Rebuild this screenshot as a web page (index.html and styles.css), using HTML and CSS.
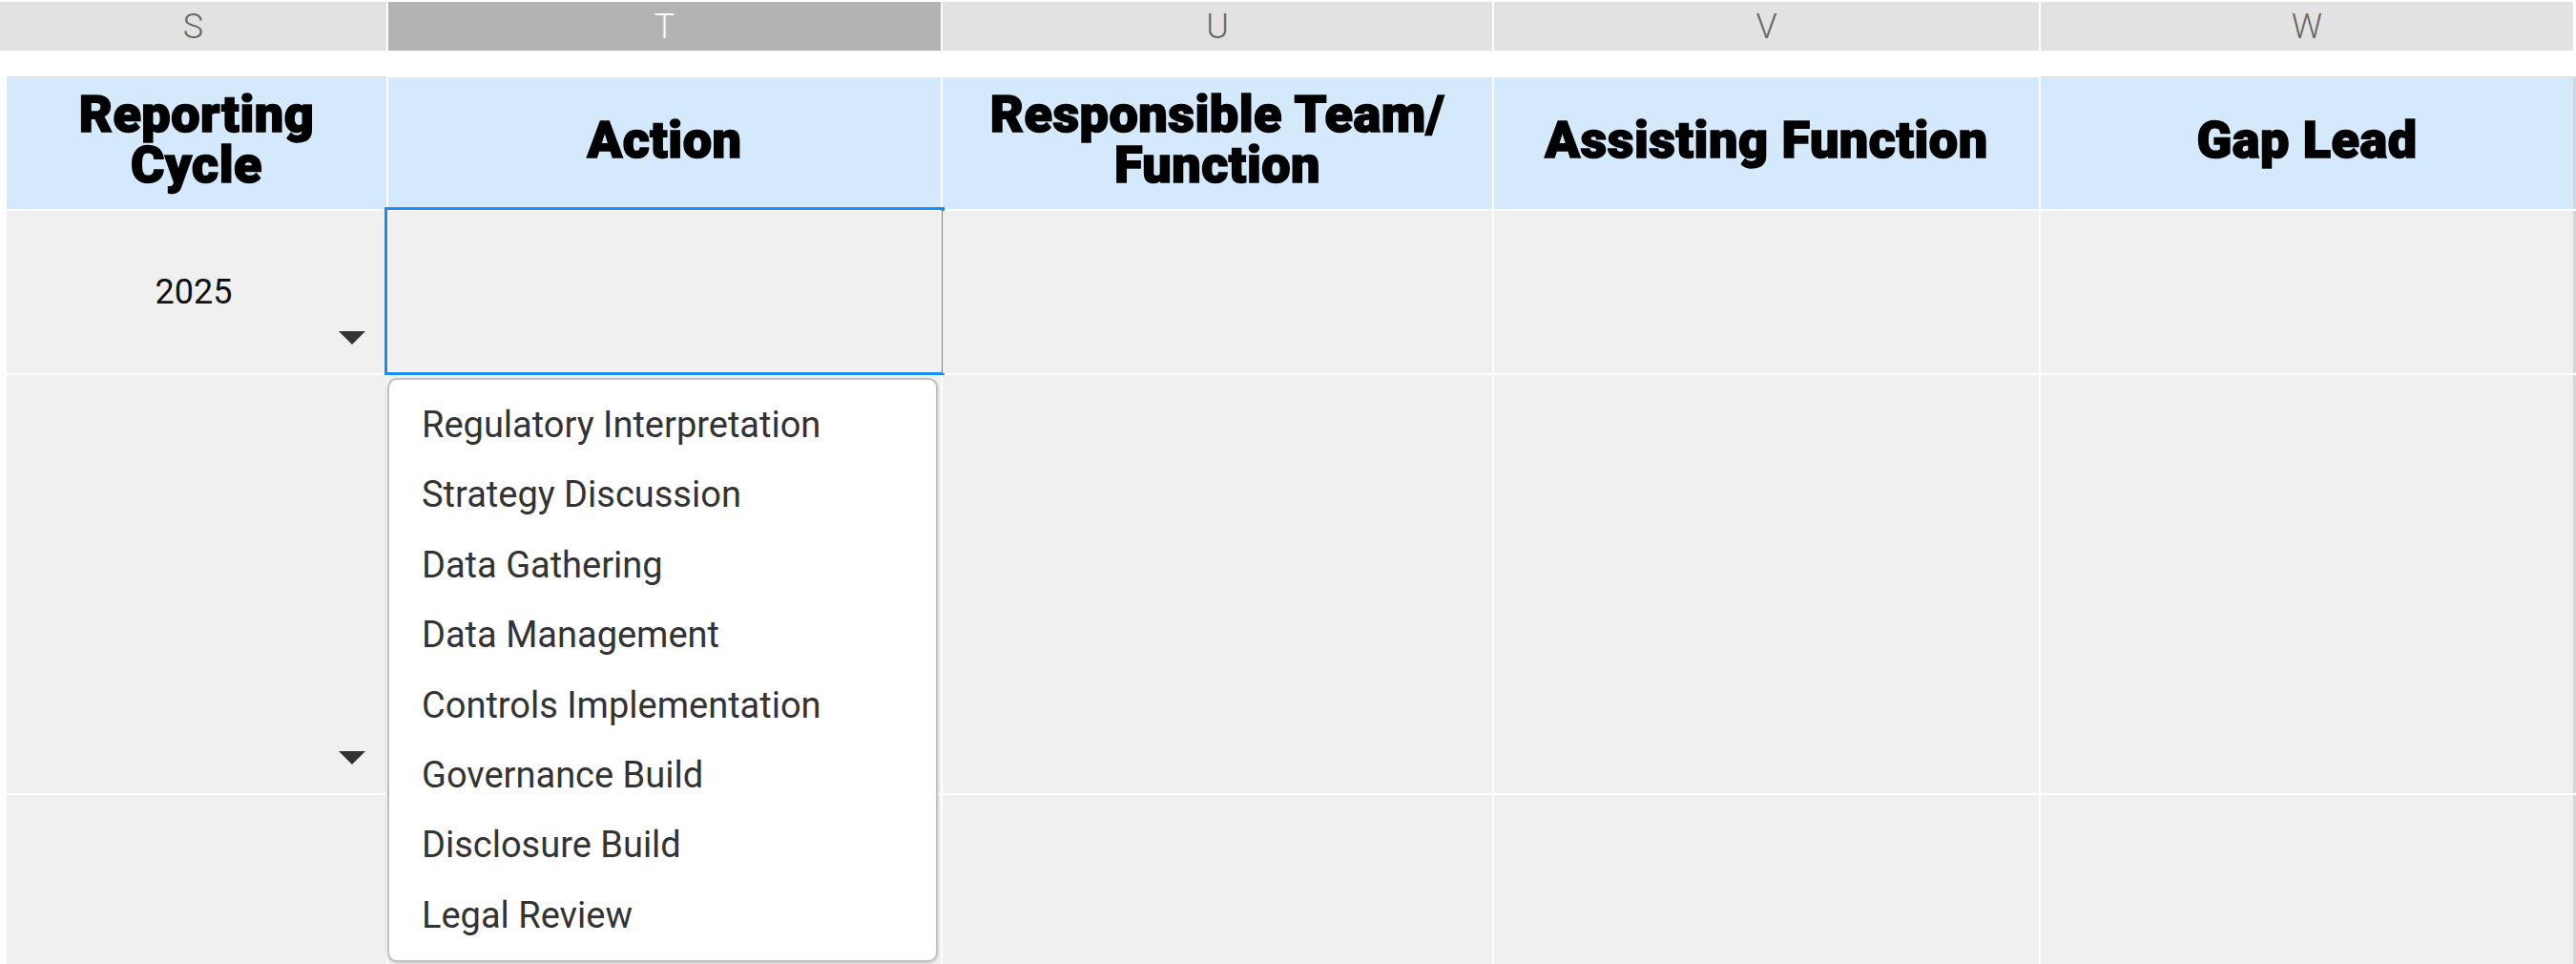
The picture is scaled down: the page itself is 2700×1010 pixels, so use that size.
FILE: index.html
```html
<!DOCTYPE html>
<html lang="en">
<head>
<meta charset="utf-8">
<title>Sheet</title>
<link rel="stylesheet" href="styles.css">
</head>
<body>
<div class="sheet">
  <div class="col-heads">
    <div class="col-head">S</div>
    <div class="col-head selected">T</div>
    <div class="col-head">U</div>
    <div class="col-head">V</div>
    <div class="col-head">W</div>
  </div>
  <div class="grid">
    <div class="hcell first edge"><span class="line">Reporting</span><span class="line">Cycle</span></div>
    <div class="hcell"><span class="line">Action</span></div>
    <div class="hcell"><span class="line">Responsible Team/</span><span class="line">Function</span></div>
    <div class="hcell"><span class="line">Assisting Function</span></div>
    <div class="hcell last edge"><span class="line">Gap Lead</span></div>

    <div class="cell first"><span class="value">2025</span><span class="caret"></span></div>
    <div class="cell active">
      <ul class="menu">
        <li>Regulatory Interpretation</li>
        <li>Strategy Discussion</li>
        <li>Data Gathering</li>
        <li>Data Management</li>
        <li>Controls Implementation</li>
        <li>Governance Build</li>
        <li>Disclosure Build</li>
        <li>Legal Review</li>
      </ul>
    </div>
    <div class="cell"></div>
    <div class="cell"></div>
    <div class="cell last"></div>

    <div class="cell first"><span class="caret"></span></div>
    <div class="cell"></div>
    <div class="cell"></div>
    <div class="cell"></div>
    <div class="cell last"></div>

    <div class="cell first"></div>
    <div class="cell"></div>
    <div class="cell"></div>
    <div class="cell"></div>
    <div class="cell last"></div>
  </div>
</div>
</body>
</html>
```
FILE: styles.css
```css
* { box-sizing: border-box; }
html, body {
  margin: 0;
  padding: 0;
  background: #ffffff;
  overflow: hidden;
}
body {
  width: 2700px;
  height: 1010px;
  font-family: Roboto, "Liberation Sans", sans-serif;
}
.sheet {
  width: 2700px;
}
.col-heads {
  display: grid;
  grid-template-columns: 405px 579px 576px 571px 558px;
  column-gap: 2px;
  margin-top: 2px;
  margin-bottom: 28px;
}
.col-head {
  height: 51px;
  background: #e2e2e2;
  color: #676767;
  font-weight: 300;
  font-size: 36px;
  display: flex;
  align-items: center;
  justify-content: center;
}
.col-head.selected {
  background: #b3b3b3;
  color: #fafafa;
}
.grid {
  display: grid;
  grid-template-columns: 405px 579px 576px 571px 561px;
  grid-template-rows: 138px 170px 438px 200px;
  column-gap: 2px;
  row-gap: 2px;
}
.hcell {
  background: #d4eafc;
  color: #000;
  font-weight: 900;
  font-size: 54px;
  letter-spacing: 0.5px;
  -webkit-text-stroke: 1.6px #000;
  text-align: center;
  display: flex;
  flex-direction: column;
  align-items: center;
  justify-content: center;
  padding-bottom: 8px;
}
.hcell .line {
  display: block;
  height: 53px;
  line-height: 53px;
  white-space: nowrap;
}
.hcell.edge {
  box-shadow: 0 -1px 0 #dcdcdc;
}
.first {
  margin-left: 7px;
}
.last {
  border-right: 3px solid #d6d6d6;
}
.cell {
  background: #f0f0f0;
  position: relative;
  display: flex;
  align-items: center;
  justify-content: center;
}
.value {
  font-size: 36px;
  color: #111;
  margin-right: 6px;
}
.caret {
  position: absolute;
  right: 22px;
  bottom: 30px;
  width: 0;
  height: 0;
  border-left: 14.5px solid transparent;
  border-right: 14.5px solid transparent;
  border-top: 14px solid #333;
}
.cell.active::after {
  content: "";
  position: absolute;
  top: -4px;
  left: -4px;
  right: -4px;
  bottom: -2px;
  border: 3px solid #1a8ef8;
  pointer-events: none;
}
.menu {
  position: absolute;
  top: 175px;
  left: -1px;
  width: 577px;
  margin: 0;
  padding: 11px 0 10px;
  list-style: none;
  background: #ffffff;
  border: 2px solid #c2c2c2;
  border-radius: 10px;
  box-shadow: 0 1px 3px rgba(0, 0, 0, 0.2);
  z-index: 5;
}
.menu li {
  height: 73.4px;
  line-height: 73.4px;
  padding-left: 34px;
  font-size: 38px;
  color: #333333;
  white-space: nowrap;
}
```
